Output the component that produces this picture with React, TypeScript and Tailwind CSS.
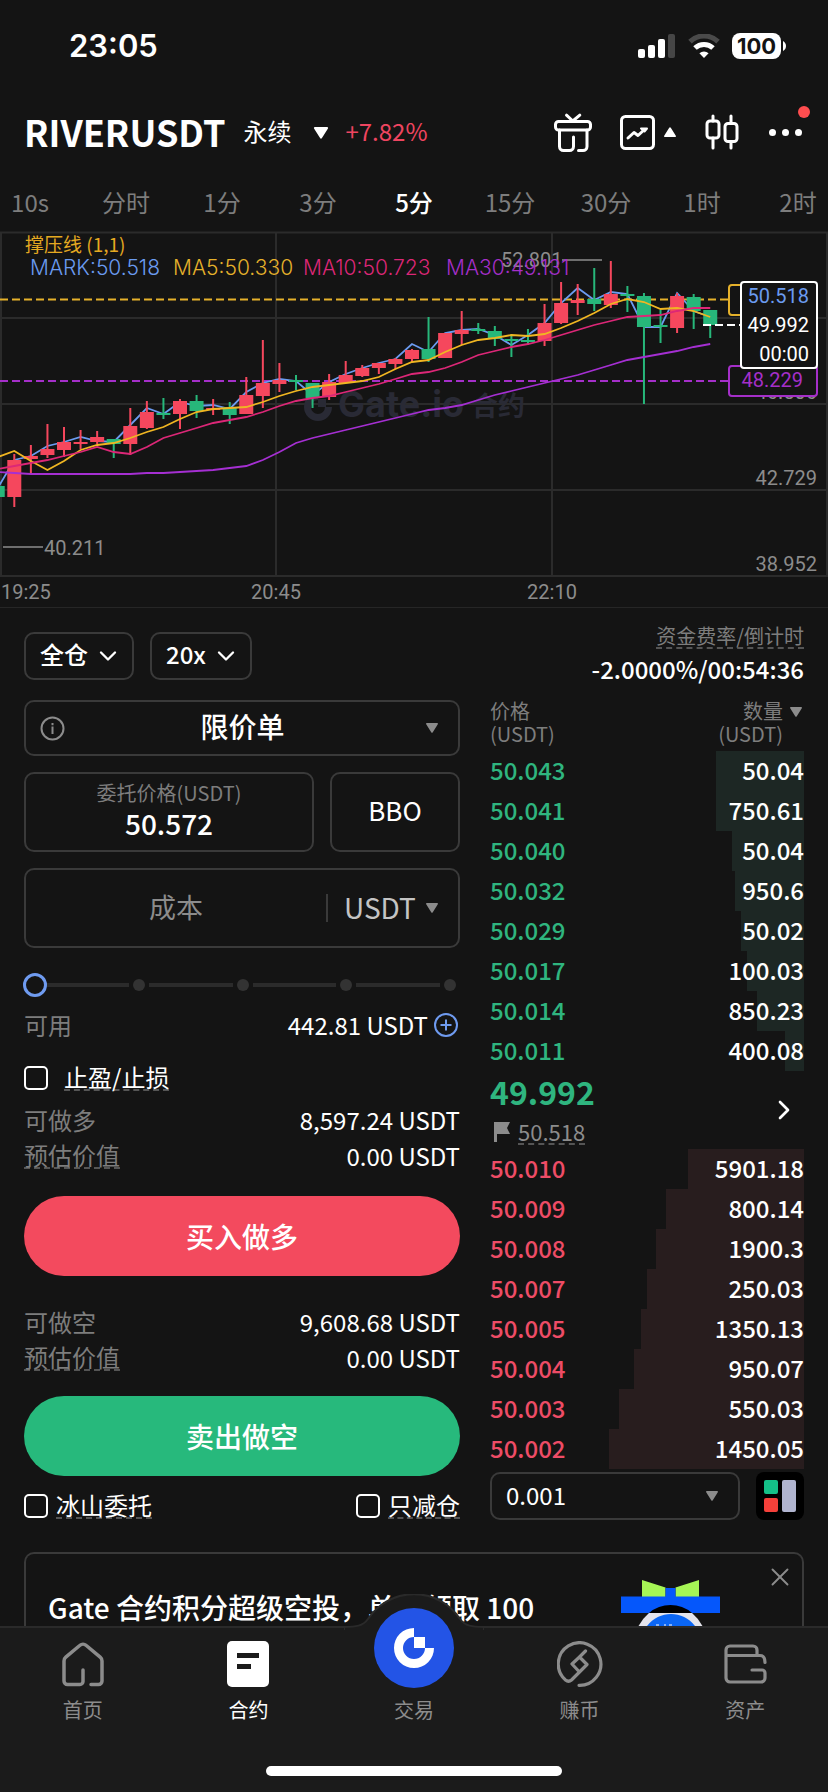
/**
 * Futures trading screen
 * Chart on top, order form on the left, order book on the right
 */

import React, { useState } from 'react';
import { ChevronDown, ChevronRight, X } from 'lucide-react';

interface Candle {
  up: boolean;
  top: number;
  bottom: number;
  high: number;
  low: number;
}

interface BookRow {
  price: string;
  amount: string;
  depth: number;
}

const INTERVALS = ['10s', '分时', '1分', '3分', '5分', '15分', '30分', '1时', '2时'];

// [up, body top, body bottom, wick top, wick bottom] in chart units
const CANDLES: Candle[] = (
  [
    [0, 254, 265, 254, 265],
    [1, 228, 265, 222, 275],
    [1, 224, 227, 213, 241],
    [1, 217, 223, 192, 226],
    [1, 210, 218, 195, 225],
    [1, 210, 212, 198, 217],
    [1, 205, 210, 199, 212],
    [0, 207, 212, 207, 226],
    [1, 194, 212, 176, 223],
    [1, 180, 196, 169, 197],
    [0, 181, 183, 166, 187],
    [1, 169, 182, 167, 197],
    [0, 169, 179, 163, 186],
    [1, 176, 178, 167, 183],
    [0, 175, 183, 170, 192],
    [1, 163, 182, 145, 182],
    [1, 151, 164, 108, 176],
    [1, 148, 152, 131, 160],
    [0, 148, 150, 143, 158],
    [0, 151, 166, 151, 176],
    [1, 150, 165, 142, 168],
    [1, 143, 151, 129, 151],
    [1, 136, 144, 133, 145],
    [1, 131, 136, 131, 142],
    [1, 127, 132, 126, 137],
    [1, 118, 127, 117, 130],
    [0, 117, 127, 85, 130],
    [1, 101, 126, 101, 126],
    [1, 98, 102, 79, 113],
    [0, 97, 99, 91, 102],
    [0, 99, 107, 94, 114],
    [0, 107, 109, 102, 125],
    [0, 108, 110, 97, 113],
    [1, 91, 109, 72, 114],
    [1, 71, 91, 50, 92],
    [1, 68, 71, 52, 83],
    [0, 67, 72, 36, 79],
    [1, 62, 73, 29, 76],
    [0, 62, 64, 54, 80],
    [0, 64, 95, 61, 172],
    [0, 93, 95, 78, 111],
    [1, 64, 96, 61, 101],
    [0, 65, 79, 62, 97],
    [0, 78, 93, 78, 106],
  ] as number[][]
).map(([up, top, bottom, high, low]) => ({ up: up === 1, top, bottom, high, low }));

const MARK_LINE = [
  256, 228, 224, 214, 210, 205, 209, 210, 193, 176, 182, 170, 174, 173, 177, 160, 151, 147, 149, 163, 150, 142,
  136, 131, 127, 112, 120, 101, 98, 97, 103, 113, 103, 91, 71, 56, 68, 60, 62, 95, 95, 61, 79, 85,
];
const MA5_LINE = [
  225, 219, 229, 238, 229, 218, 213, 211, 206, 200, 195, 187, 180, 177, 176, 175, 170, 164, 159, 155, 153, 151,
  149, 145, 137, 130, 128, 120, 113, 108, 106, 103, 104, 102, 96, 89, 81, 72, 67, 70, 77, 76, 79, 85,
];
const MA10_LINE = [
  237, 234, 231, 228, 224, 220, 215, 220, 222, 215, 206, 201, 196, 191, 188, 185, 180, 174, 169, 166, 164, 160,
  156, 152, 147, 142, 140, 136, 130, 123, 119, 115, 112, 108, 103, 98, 93, 89, 85, 84, 83, 79, 76, 76,
];
const MA30_LINE = [
  240, 241, 242, 242, 242, 242, 242, 242, 242, 241, 241, 240, 239, 238, 236, 234, 228, 220, 211, 206, 202, 198,
  194, 190, 186, 182, 178, 176, 173, 168, 163, 159, 155, 151, 147, 143, 138, 133, 128, 125, 122, 119, 115, 112,
];

const BUYS: BookRow[] = [
  { price: '50.043', amount: '50.04', depth: 28 },
  { price: '50.041', amount: '750.61', depth: 28 },
  { price: '50.040', amount: '50.04', depth: 23 },
  { price: '50.032', amount: '950.6', depth: 22 },
  { price: '50.029', amount: '50.02', depth: 20 },
  { price: '50.017', amount: '100.03', depth: 18 },
  { price: '50.014', amount: '850.23', depth: 15 },
  { price: '50.011', amount: '400.08', depth: 6 },
];

const SELLS: BookRow[] = [
  { price: '50.010', amount: '5901.18', depth: 37 },
  { price: '50.009', amount: '800.14', depth: 44 },
  { price: '50.008', amount: '1900.3', depth: 47 },
  { price: '50.007', amount: '250.03', depth: 50 },
  { price: '50.005', amount: '1350.13', depth: 52 },
  { price: '50.004', amount: '950.07', depth: 54 },
  { price: '50.003', amount: '550.03', depth: 59 },
  { price: '50.002', amount: '1450.05', depth: 62 },
];

const candleX = (i: number) => 14.3 + (i - 1) * 16.57;
const toPoints = (line: number[]) => line.map((y, i) => `${candleX(i)},${y}`).join(' ');

function Triangle({ className, up = false }: { className: string; up?: boolean }) {
  return (
    <svg className={className} viewBox="0 0 12 10" fill="currentColor" aria-hidden="true">
      <path d={up ? 'M5.2.8a1 1 0 0 1 1.6 0l5 8A.8.8 0 0 1 11 10H1a.8.8 0 0 1-.8-1.2z' : 'M5.2 9.2a1 1 0 0 0 1.6 0l5-8A.8.8 0 0 0 11 0H1a.8.8 0 0 0-.8 1.2z'} />
    </svg>
  );
}

function StatusBar() {
  return (
    <div className="flex h-[92px] items-center justify-between pl-[69px] pr-[42px]">
      <span className="font-['Inter'] text-[31px] font-semibold leading-8">23:05</span>
      <div className="flex items-center gap-3">
        <svg className="h-6 w-[38px]" viewBox="0 0 38 24" fill="#fff">
          <rect x="0" y="15" width="7" height="9" rx="2" />
          <rect x="10" y="11" width="7" height="13" rx="2" />
          <rect x="20" y="5" width="7" height="19" rx="2" />
          <rect x="30" y="0" width="7" height="24" rx="2" fill="#464646" />
        </svg>
        <svg className="h-6 w-8" viewBox="0 0 32 24" fill="none">
          <path d="M2 7.6a20 20 0 0 1 28 0" stroke="#4a4a4a" strokeWidth="5" />
          <path d="M7 14a13 13 0 0 1 18 0" stroke="#fff" strokeWidth="5" />
          <path d="M11.4 19.2a7 7 0 0 1 9.2 0L16 24z" fill="#fff" />
        </svg>
        <div className="flex items-center gap-[2px]">
          <span className="flex h-[26px] w-[49px] items-center justify-center rounded-lg bg-white font-['Inter'] text-[22px] font-bold text-[#141414]">
            100
          </span>
          <svg className="h-[10px] w-[3px]" viewBox="0 0 3 10" fill="#fff">
            <path d="M0 0c4 2 4 8 0 10z" />
          </svg>
        </div>
      </div>
    </div>
  );
}

function Header() {
  return (
    <header className="flex h-20 items-center justify-between pl-6 pr-[26px]">
      <div className="flex items-center pb-[3px]">
        <h1 className="text-[36px] font-bold leading-10">RIVERUSDT</h1>
        <span className="ml-[18px] text-[24px]">永续</span>
        <Triangle className="ml-[22px] mt-1 h-3 w-4" />
        <span className="ml-4 text-[24px] text-[#ef4560]">+7.82%</span>
      </div>
      <div className="flex items-center">
        <button aria-label="礼物">
          <svg className="h-[39px] w-[38px]" viewBox="0 0 38 39" fill="none" stroke="#fff" strokeWidth="3" strokeLinecap="round" strokeLinejoin="round">
            <path d="M12.5 2.2 18.8 8l7-5.8" />
            <rect x="1.5" y="8.5" width="35" height="8.5" rx="3" />
            <path d="M5.5 17v16.5a4 4 0 0 0 4 4h6a4 4 0 0 0 4-4V24M33 17v16.5a4 4 0 0 1-4 4h-4.500" />
          </svg>
        </button>
        <button className="ml-7 flex items-center gap-[9px]" aria-label="图表">
          <svg className="size-[35px]" viewBox="0 0 35 35" fill="none" stroke="#fff" strokeWidth="3" strokeLinecap="round" strokeLinejoin="round">
            <rect x="1.500" y="1.500" width="32" height="32" rx="4" />
            <path d="M8 23l6-5.500 4 3 6.500-6" />
            <path d="M21 13.500h6l-2.500 3z" strokeWidth="2" />
          </svg>
          <Triangle className="h-[10px] w-3" up />
        </button>
        <button className="ml-[29px]" aria-label="K线">
          <svg className="h-9 w-[34px]" viewBox="0 0 34 36" fill="none" stroke="#fff" strokeWidth="3" strokeLinecap="round">
            <rect x="2" y="7" width="12" height="17" rx="3" />
            <path d="M8 2v5M8 24v10M26 2v7M26 28v6" />
            <rect x="20" y="9.500" width="12" height="18" rx="3" />
          </svg>
        </button>
        <button className="relative ml-[30px] flex gap-[6px]" aria-label="更多">
          <i className="size-[7px] rounded-full bg-white" />
          <i className="size-[7px] rounded-full bg-white" />
          <i className="size-[7px] rounded-full bg-white" />
          <i className="absolute -right-2 -top-[23px] size-3 rounded-full bg-[#ff4d4f]" />
        </button>
      </div>
    </header>
  );
}

function IntervalTabs() {
  const [active, setActive] = useState('5分');

  return (
    <nav className="flex h-[60px] justify-center overflow-hidden pt-[6px]">
      {INTERVALS.map((item) => (
        <button
          key={item}
          onClick={() => setActive(item)}
          className={`h-12 w-24 shrink-0 text-[24px] ${item === active ? 'font-medium text-white' : 'text-[#7d7d7d]'}`}
        >
          {item}
        </button>
      ))}
    </nav>
  );
}

function PriceChart() {
  return (
    <svg className="block w-full overflow-visible border-b border-[#262626] font-['Roboto']" viewBox="0 0 828 375" fontSize="20">
      {/* Grid */}
      <path
        d="M0 .5H828M0 86H828M0 172H828M0 258H828M0 344H828M1 0V344M276 0V344M552 0V344M827 0V344"
        stroke="#2b2b2b"
        strokeWidth="2"
      />

      {/* Watermark */}
      <g fill="#292a35">
        <path d="M318 161a14 14 0 1 0 14 14h-7a7 7 0 1 1-7-7z" />
        <rect x="318" y="167" width="8" height="8" />
        <text x="338" y="185" fontSize="36" fontWeight="700" fontFamily="Inter">Gate.io</text>
        <text x="471" y="184" fontSize="27" fontWeight="700" fontFamily="Noto Sans CJK SC">合约</text>
      </g>

      {/* Support and resistance */}
      <path d="M0 67.500H728" stroke="#e5b12b" strokeWidth="2" strokeDasharray="8 4" />
      <path d="M0 149H728" stroke="#a52fc9" strokeWidth="2" strokeDasharray="8 4" />

      {/* Candles */}
      <polyline points={toPoints(MARK_LINE)} fill="none" stroke="#6b9bf0" strokeWidth="1.800" />
      {CANDLES.map((c, i) => (
        <g key={i} fill={c.up ? '#f5475d' : '#27b77a'}>
          <rect x={candleX(i) - 1} y={c.high} width="2" height={c.low - c.high} />
          <rect x={candleX(i) - 7} y={c.top} width="14" height={c.bottom - c.top} />
        </g>
      ))}
      <g fill="none" strokeWidth="1.800">
        <polyline points={toPoints(MA5_LINE)} stroke="#f0b622" />
        <polyline points={toPoints(MA10_LINE)} stroke="#dc2777" />
        <polyline points={toPoints(MA30_LINE)} stroke="#a52fd2" />
      </g>
      <path d="M703 93H741" stroke="#fff" strokeWidth="2" strokeDasharray="8 4" />

      {/* High and low marks */}
      <g fill="#8c8c8c">
        <path d="M562 28h40M3 315h40" stroke="#8c8c8c" strokeWidth="1.500" />
        <text x="501" y="35">52.801</text>
        <text x="44" y="323">40.211</text>
        <text x="1" y="367">19:25</text>
        <text x="276" y="367" textAnchor="middle">20:45</text>
        <text x="552" y="367" textAnchor="middle">22:10</text>
        <text x="817" y="167" textAnchor="end">46.506</text>
        <text x="817" y="253" textAnchor="end">42.729</text>
        <text x="817" y="339" textAnchor="end">38.952</text>
      </g>

      {/* Indicator legend */}
      <text x="25" y="20" fill="#e5a921" fontSize="19" fontFamily="Noto Sans CJK SC">撑压线 (1,1)</text>
      <g fontFamily="Inter" fontWeight="300" fontSize="21">
        <text x="30" y="43" fill="#6b9bf0">MARK:50.518</text>
        <text x="173" y="43" fill="#e5b12b">MA5:50.330</text>
        <text x="303" y="43" fill="#dc2777">MA10:50.723</text>
        <text x="446" y="43" fill="#a52fc9">MA30:49.131</text>
      </g>

      {/* Price tags */}
      <g fill="#141414" strokeWidth="2">
        <rect x="729" y="53" width="88" height="30" rx="3" stroke="#e5b12b" />
        <rect x="729" y="134" width="88" height="30" rx="3" stroke="#a52fc9" />
        <rect x="741" y="50" width="76" height="86" rx="3" stroke="#fff" />
      </g>
      <text x="809" y="71" textAnchor="end" fill="#6b9bf0">50.518</text>
      <text x="809" y="100" textAnchor="end" fill="#fff">49.992</text>
      <text x="809" y="129" textAnchor="end" fill="#fff">00:00</text>
      <text x="803" y="155" textAnchor="end" fill="#a52fc9">48.229</text>
    </svg>
  );
}

function PillSelect({ label, value }: { label: string; value: string }) {
  return (
    <label className="flex h-12 items-center gap-[6px] rounded-[10px] border-2 border-[#3a3a3a] pl-[14px] pr-[10px]">
      <select aria-label={label} className="appearance-none bg-transparent pb-1 text-[24px] font-medium leading-8 outline-none">
        <option>{value}</option>
      </select>
      <ChevronDown className="size-7" strokeWidth={2} />
    </label>
  );
}

function CheckOption({ text, gap }: { text: string; gap: string }) {
  return (
    <label className={`flex h-8 items-center ${gap}`}>
      <input type="checkbox" className="size-6 appearance-none rounded-[5px] border-2 border-white checked:bg-white" />
      <span className="border-b-2 border-dashed border-[#555] text-[24px] leading-6">{text}</span>
    </label>
  );
}

function InfoRow({ name, value, dashed = false }: { name: string; value: string; dashed?: boolean }) {
  return (
    <div className="flex h-9 items-center justify-between text-[24px]">
      <span className={`leading-6 text-[#7d7d7d] ${dashed ? 'border-b-2 border-dashed border-[#555]' : ''}`}>{name}</span>
      <span className="leading-6">{value}</span>
    </div>
  );
}

function OrderForm() {
  const [price, setPrice] = useState('50.572');
  const [percent, setPercent] = useState(0);

  return (
    <form className="flex min-w-0 flex-col" onSubmit={(e) => e.preventDefault()}>
      <div className="flex gap-4">
        <PillSelect label="保证金模式" value="全仓" />
        <PillSelect label="杠杆" value="20x" />
      </div>

      <label className="mt-5 flex h-14 items-center rounded-[10px] border-2 border-[#3a3a3a] px-[14px]">
        <svg className="size-[25px]" viewBox="0 0 25 25" fill="none" stroke="#8c8c8c" strokeWidth="2">
          <circle cx="12.500" cy="12.500" r="11" />
          <path d="M12.500 10.500v7.500M12.500 7v2.200" />
        </svg>
        <select aria-label="订单类型" className="flex-1 appearance-none bg-transparent pb-1 pr-[6px] text-center text-[28px] font-medium leading-9 outline-none [text-align-last:center]">
          <option>限价单</option>
        </select>
        <Triangle className="mr-[6px] h-[10px] w-3 text-[#8c8c8c]" />
      </label>

      <div className="mt-4 grid grid-cols-[290fr_130fr] gap-4">
        <label className="flex h-20 min-w-0 flex-col items-center justify-center rounded-[10px] border-2 border-[#3a3a3a] pb-[6px]">
          <span className="text-[20px] leading-7 text-[#7d7d7d]">委托价格(USDT)</span>
          <input
            value={price}
            onChange={(e) => setPrice(e.target.value)}
            className="w-full bg-transparent text-center text-[28px] font-medium leading-8 outline-none"
          />
        </label>
        <button type="button" className="h-20 rounded-[10px] border-2 border-[#3a3a3a] pb-[6px] text-[26px]">
          BBO
        </button>
      </div>

      <div className="mt-4 flex h-20 items-center rounded-[10px] border-2 border-[#3a3a3a] pr-5">
        <input
          aria-label="成本"
          placeholder="成本"
          className="min-w-0 flex-1 bg-transparent pb-[2px] text-center text-[27px] outline-none placeholder:text-[#8c8c8c]"
        />
        <span className="h-7 w-[2px] bg-[#3a3a3a]" />
        <label className="ml-4 flex items-center gap-[10px]">
          <select aria-label="单位" className="appearance-none bg-transparent pb-[2px] text-[28px] leading-8 text-[#c4c4c4] outline-none">
            <option>USDT</option>
          </select>
          <Triangle className="h-[10px] w-3 text-[#8c8c8c]" />
        </label>
      </div>

      {/* Amount slider */}
      <div className="relative -ml-px mr-1 mt-[25px] flex h-6 items-center">
        <span className="z-10 -mr-[6px] size-6 shrink-0 rounded-full border-[3px] border-[#6f9bf0] bg-[#141414]" />
        {[25, 50, 75, 100].map((step) => (
          <React.Fragment key={step}>
            <span className="mx-1 h-1 flex-1 bg-[#2b2b2b]" />
            <span className="size-3 rounded-full bg-[#333]" />
          </React.Fragment>
        ))}
        <input
          type="range"
          aria-label="仓位比例"
          value={percent}
          onChange={(e) => setPercent(Number(e.target.value))}
          className="absolute inset-0 z-20 w-full opacity-0"
        />
      </div>

      <div className="mt-3 flex h-8 items-center text-[24px]">
        <span className="flex-1 text-[#7d7d7d]">可用</span>
        <span>442.81 USDT</span>
        <button type="button" aria-label="充值" className="ml-[6px] mr-[2px]">
          <svg className="size-6" viewBox="0 0 24 24" fill="none" stroke="#6f9bf0" strokeWidth="2">
            <circle cx="12" cy="12" r="11" />
            <path d="M6.500 12h11M12 6.500v11" />
          </svg>
        </button>
      </div>

      <div className="mb-2 mt-[21px]">
        <CheckOption text="止盈/止损" gap="gap-4" />
      </div>

      <InfoRow name="可做多" value="8,597.24 USDT" />
      <InfoRow name="预估价值" value="0.00 USDT" dashed />
      <button className="mt-[22px] h-20 rounded-full bg-[#f34a5e] text-[28px] font-medium">买入做多</button>

      <div className="mt-7">
        <InfoRow name="可做空" value="9,608.68 USDT" />
        <InfoRow name="预估价值" value="0.00 USDT" dashed />
      </div>
      <button type="button" className="mt-5 h-20 rounded-full bg-[#27b97c] text-[28px] font-medium">
        卖出做空
      </button>

      <div className="mt-[14px] flex justify-between">
        <CheckOption text="冰山委托" gap="gap-2" />
        <CheckOption text="只减仓" gap="gap-2" />
      </div>
    </form>
  );
}

function BookRows({ rows, side }: { rows: BookRow[]; side: 'buy' | 'sell' }) {
  const tint = side === 'buy' ? '#1d2724' : '#281d1e';

  return (
    <tbody>
      {rows.map((row) => (
        <tr
          key={row.price}
          className="h-10"
          style={{ background: `linear-gradient(to left, ${tint} ${row.depth}%, transparent ${row.depth}%)` }}
        >
          <td className={`p-0 pb-[3px] ${side === 'buy' ? 'text-[#2fb57f]' : 'text-[#ee4c66]'}`}>{row.price}</td>
          <td className="p-0 pb-[3px] text-right">{row.amount}</td>
        </tr>
      ))}
    </tbody>
  );
}

function OrderBook() {
  return (
    <section className="flex min-w-0 flex-col">
      <div className="-mt-2 flex flex-col items-end">
        <span className="border-b-2 border-dashed border-[#555] text-[20px] leading-[23px] text-[#7d7d7d]">资金费率/倒计时</span>
        <span className="mt-1 text-[24px] font-medium leading-8">-2.0000%/00:54:36</span>
      </div>

      <table className="mt-[14px] w-full text-[24px] font-medium leading-8">
        <thead>
          <tr className="text-[20px] leading-[23px] text-[#7d7d7d]">
            <th className="p-0 pb-[6px] text-left font-normal">
              价格
              <br />
              (USDT)
            </th>
            <th className="p-0 pb-[6px] font-normal">
              <div className="flex items-start justify-end gap-[7px] text-right">
                <span>
                  数量
                  <br />
                  (USDT)
                </span>
                <Triangle className="mr-[2px] mt-2 h-[10px] w-3 text-[#8c8c8c]" />
              </div>
            </th>
          </tr>
        </thead>
        <BookRows rows={BUYS} side="buy" />
      </table>

      <div className="flex h-[78px] items-center justify-between">
        <div className="flex flex-col gap-3">
          <div className="text-[32px] font-bold leading-8 text-[#2fb57f]">49.992</div>
          <div className="flex items-center gap-2 pl-1 text-[22px] text-[#8c8c8c]">
            <svg className="h-5 w-4" viewBox="0 0 16 20" fill="currentColor">
              <path d="M0 0h16l-3 6 3 6H3v8H0z" />
            </svg>
            <span className="border-b-2 border-dashed border-[#555] leading-6">50.518</span>
          </div>
        </div>
        <button aria-label="盘口详情" className="mr-1">
          <ChevronRight className="size-8" strokeWidth={2} />
        </button>
      </div>

      <table className="w-full text-[24px] font-medium leading-8">
        <BookRows rows={SELLS} side="sell" />
      </table>

      <div className="mt-[3px] flex gap-4">
        <label className="flex h-12 flex-1 items-center rounded-[10px] border-2 border-[#3a3a3a] pl-[14px] pr-5">
          <select aria-label="价格精度" className="flex-1 appearance-none bg-transparent pb-[2px] text-[24px] leading-8 outline-none">
            <option>0.001</option>
          </select>
          <Triangle className="h-[10px] w-3 text-[#8c8c8c]" />
        </label>
        <button aria-label="盘口布局" className="grid size-12 grid-cols-2 grid-rows-2 gap-1 rounded-lg bg-black p-2">
          <i className="rounded-[2px] bg-[#14c088]" />
          <i className="row-span-2 rounded-[2px] bg-[#b0b4cf]" />
          <i className="rounded-[2px] bg-[#f5403a]" />
        </button>
      </div>
    </section>
  );
}

function PromoBanner() {
  return (
    <aside className="mx-6 mt-[30px] flex h-[74px] overflow-hidden rounded-t-[10px] border-2 border-b-0 border-[#3a3a3a]">
      <p className="flex-1 whitespace-nowrap pl-[22px] pt-[35px] text-[28px] font-medium leading-9">
        Gate 合约积分超级空投，单人领取 100
      </p>
      <svg className="mt-[26px] h-[46px] w-[99px]" viewBox="0 0 99 46">
        <path d="M21 0l23.500 7.500V17H21zM78 0 54.500 7.500V17H78z" fill="#a6f655" />
        <path d="M44.500 8h10v9h-10zM0 16.500h99V33H0z" fill="#0557fb" />
        <path d="M28 33a33 33 0 0 1 43 0z" fill="#000" />
        <path d="M28 33h43q7 6 11 14H17q4-8 11-14z" fill="#e4e4ec" />
        <path d="M26 46c12-16 36-16 48 0z" fill="#0a66f5" />
        <path d="M35 45h3M43 45h2M48 45h3" stroke="#fff" />
      </svg>
      <button aria-label="关闭" className="ml-[45px] mr-[7px] mt-2 h-[30px]">
        <X className="size-[30px] text-[#8c8c8c]" strokeWidth={1.5} />
      </button>
    </aside>
  );
}

function NavItem({ label, active = false, children }: { label: string; active?: boolean; children: React.ReactNode }) {
  return (
    <a href="#" className={`flex flex-1 flex-col items-center gap-[9px] ${active ? 'text-white' : 'text-[#8c8c8c]'}`}>
      <span className="flex h-[46px] items-center justify-center">{children}</span>
      <span className="text-[20px] leading-7">{label}</span>
    </a>
  );
}

function BottomNav() {
  return (
    <footer className="relative flex min-h-[166px] flex-1 flex-col items-center justify-between border-t-2 border-[#2a2a2a] bg-[#1b1b1b]">
      {/* Bump behind the trade button */}
      <svg className="absolute -top-[34px] left-1/2 h-9 w-[140px] -translate-x-1/2" viewBox="0 0 140 36" fill="#1b1b1b" stroke="#2a2a2a" strokeWidth="2">
        <path d="M0 33c12 0 19-1 24-8a55 55 0 0 1 92 0c5 7 12 8 24 8v8H0z" />
        <path d="M1 34h138v4H1z" stroke="none" />
      </svg>

      <nav className="relative flex w-full pt-[13px]">
        <NavItem label="首页">
          <svg className="h-[45px] w-[42px]" viewBox="0 0 42 45" fill="none" stroke="currentColor" strokeWidth="3.500" strokeLinecap="round">
            <path d="M21 28v11.500a3 3 0 0 1-3 3H5.500a3.500 3.500 0 0 1-3.500-3.500V19a5 5 0 0 1 1.800-3.800L18 3.300a4.500 4.500 0 0 1 6 0l14.200 11.900A5 5 0 0 1 40 19v20a3.500 3.500 0 0 1-3.500 3.500H29" />
          </svg>
        </NavItem>
        <NavItem label="合约" active>
          <svg className="h-[46px] w-[42px]" viewBox="0 0 42 46">
            <rect width="42" height="46" rx="5" fill="#fff" />
            <path d="M10 12h22v5H10zM10 23h14v5H10z" fill="#1b1b1b" />
          </svg>
        </NavItem>
        <NavItem label="交易">
          <svg className="-mt-8 size-20" viewBox="0 0 80 80">
            <circle cx="40" cy="40" r="40" fill="#2354e6" />
            <path d="M40 20a20 20 0 1 0 20 20h-9a11 11 0 1 1-11-11z" fill="#fff" />
            <path d="M40 29h11v11H40z" fill="#fff" />
          </svg>
        </NavItem>
        <NavItem label="赚币">
          <svg className="size-[46px]" viewBox="0 0 46 46" fill="none" stroke="currentColor" strokeWidth="3.200" strokeLinecap="round" strokeLinejoin="round">
            <path d="M22 44.300A21.300 21.300 0 1 0 8.500 39q3 2.500 6 0L30 23.500l-7.500-7.500-7.500 7 7 7.500M22.500 16l6-6" />
          </svg>
        </NavItem>
        <NavItem label="资产">
          <svg className="h-10 w-[43px]" viewBox="0 0 43 40" fill="none" stroke="currentColor" strokeWidth="3.200" strokeLinecap="round">
            <path d="M33 11V6a4 4 0 0 0-4-4H6a4 4 0 0 0-4 4v28a4 4 0 0 0 4 4h31a4 4 0 0 0 4-4v-5a3 3 0 0 0-3-3H28M2 11.500h34q5 0 5 7" />
          </svg>
        </NavItem>
      </nav>

      <div className="mb-4 h-[10px] w-[296px] rounded-full bg-white" />
    </footer>
  );
}

export default function App() {
  return (
    <div className="flex min-h-screen flex-col bg-[#141414] font-['Noto_Sans_CJK_SC',sans-serif] text-white">
      <StatusBar />
      <Header />
      <IntervalTabs />
      <PriceChart />
      <main className="grid grid-cols-[436fr_314fr] gap-[30px] px-6 pt-6">
        <OrderForm />
        <OrderBook />
      </main>
      <PromoBanner />
      <BottomNav />
    </div>
  );
}
